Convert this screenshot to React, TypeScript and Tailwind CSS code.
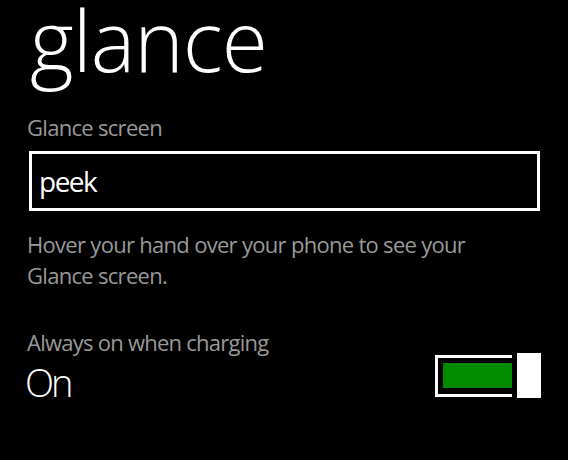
import { useState } from 'react';

export default function App() {
  const [on, setOn] = useState(true);

  return (
    <div
      className="w-[568px] h-[460px] bg-black text-white overflow-hidden pl-[27px] pr-[28px]"
      style={{ fontFamily: '"Open Sans", "Noto Sans", sans-serif' }}
    >
      <h1 className="text-[84px] leading-[79px] font-light tracking-[-1px] ml-[3px]">glance</h1>

      <div className="mt-[34px] text-[22px] leading-[28px] tracking-[-0.7px] text-[#999999]">Glance screen</div>

      <div className="mt-[10px] ml-[2px] h-[60px] border-[3px] border-white flex items-center pl-[7px]">
        <span className="text-[28px] leading-[28px] tracking-[-1.5px]">peek</span>
      </div>

      <p className="mt-[18px] text-[22px] leading-[31px] tracking-[-0.7px] text-[#999999]">
        Hover your hand over your phone to see your
        <br />
        Glance screen.
      </p>

      <div className="mt-[37px] text-[22px] leading-[28px] tracking-[-0.75px] text-[#999999]">
        Always on when charging
      </div>

      <div className="mt-[-3px] flex items-start justify-between">
        <div className="mt-[6px] ml-[-2px] text-[38px] leading-[46px] font-light tracking-[-3px]">
          {on ? 'On' : 'Off'}
        </div>
        <button onClick={() => setOn(!on)} className="mr-[-1px] flex items-center gap-[5px] h-[45px]">
          <div className="w-[77px] h-[42px] border-l-[3px] border-t-[3px] border-b-[3px] border-white flex items-center pl-[5px]">
            <div className={`flex-1 h-[25px] ${on ? 'bg-[#008a00]' : 'bg-black'}`} />
          </div>
          <div className="w-[24px] h-[45px] bg-white" />
        </button>
      </div>
    </div>
  );
}
